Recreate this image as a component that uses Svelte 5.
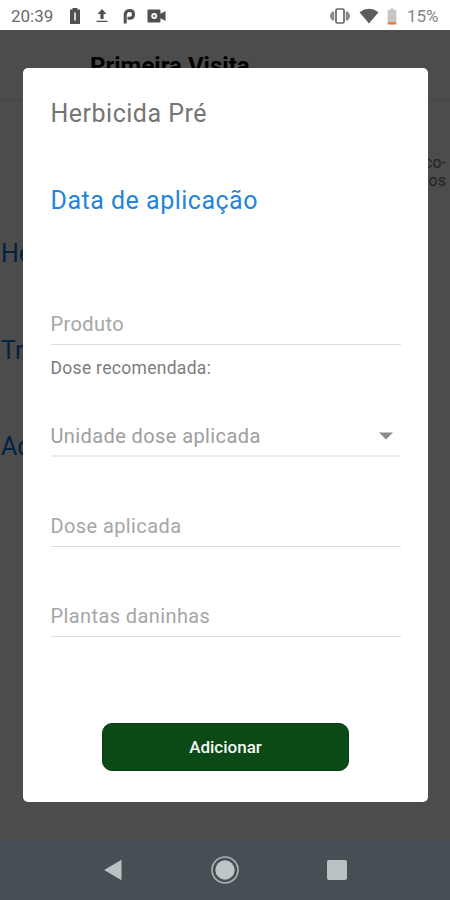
<script>
  const sections = ['Herbicida Pré', 'Tratamento', 'Adubação'];

  let product = $state('');
  let dose = $state('');
  let weeds = $state('');
</script>

<div class="phone">
  <header class="status">
    <span class="clock">20:39</span>
    <svg class="i-battery" width="12" height="18" viewBox="0 0 12 18">
      <path fill="#505050" d="M3.5 1h5v1.5H11V17H1V2.500h2.500z" />
      <path fill="#e8e8e8" d="M5.200 5.500h1.700v8H5.200z" />
    </svg>
    <svg class="i-upload" width="12" height="14" viewBox="0 0 12 14">
      <path fill="#505050" d="M6 0l4.500 5H7.600v5H4.400V5H1.500zM.5 11.700h11V13H.5z" />
    </svg>
    <svg class="i-parking" width="14" height="17" viewBox="0 0 14 17">
      <path fill="none" stroke="#505050" stroke-width="3" d="M3.200 15.500V7.500C3.200 4 5 2.500 7.500 2.500C10 2.500 11.500 4 11.500 6.300C11.500 8.700 10 10.300 7.600 10.300H5.500" />
    </svg>
    <svg class="i-camera" width="19" height="14" viewBox="0 0 19 14">
      <path fill="#505050" d="M1.500.5h11q1 0 1 1v3.300L18.500 2v10l-5-2.800v3.300q0 1-1 1h-11q-1 0-1-1v-11q0-1 1-1z" />
      <circle cx="7.200" cy="7" r="3" fill="#fff" />
      <circle cx="7.200" cy="7" r="1.300" fill="#707070" />
    </svg>
    <span class="spacer"></span>
    <svg class="i-vibrate" width="22" height="16" viewBox="0 0 22 16">
      <rect x="7" y="1" width="8" height="14" rx="1.300" fill="none" stroke="#686868" stroke-width="1.700" />
      <path fill="#8a8a8a" d="M3 3.500h2.300v9H3L.5 8zM19 3.500h-2.300v9H19L21.500 8z" />
    </svg>
    <svg class="i-wifi" width="20" height="16" viewBox="0 0 20 16">
      <path fill="#5c5c5c" d="M.5 4.300Q10-2.600 19.500 4.300L10 15.500z" />
    </svg>
    <svg class="i-charge" width="10" height="17" viewBox="0 0 10 17">
      <path fill="#c6c6c6" d="M3 .5h4V2h2.300v12.500H.7V2H3z" />
      <path fill="#ef7434" d="M.7 14.200h8.600v2.300H.7z" />
    </svg>
    <span class="percent">15%</span>
  </header>

  <main class="screen">
    <div class="page">
      <h1>Primeira Visita</h1>
      <p class="steps">Reco-<br />lhidos</p>
      {#each sections as section}
        <p class="section">{section}</p>
      {/each}
    </div>

    <div class="backdrop">
      <form class="dialog">
        <h2>Herbicida Pré</h2>
        <a class="date" href="#data">Data de aplicação</a>
        <input class="product" placeholder="Produto" bind:value={product} />
        <p class="hint">Dose recomendada:</p>
        <div class="select">
          <span>Unidade dose aplicada</span>
          <svg width="14" height="8" viewBox="0 0 14 8">
            <path fill="#8c8c8c" d="M0 .5h14L7 7.500z" />
          </svg>
        </div>
        <input class="dose" placeholder="Dose aplicada" bind:value={dose} />
        <input class="weeds" placeholder="Plantas daninhas" bind:value={weeds} />
        <button type="button">Adicionar</button>
      </form>
    </div>
  </main>

  <nav class="navbar">
    <svg width="20" height="22" viewBox="0 0 20 22">
      <path fill="#bcc2c4" d="M1.200 11L18.500.8v20.400z" />
    </svg>
    <svg width="30" height="30" viewBox="0 0 30 30">
      <circle cx="15" cy="15" r="13" fill="none" stroke="#a9b0b3" stroke-width="1.700" />
      <circle cx="15" cy="15" r="9.700" fill="#c0c5c7" />
    </svg>
    <svg width="20" height="20" viewBox="0 0 20 20">
      <rect width="20" height="20" rx="2" fill="#bbc0c2" />
    </svg>
  </nav>
</div>

<style>
  :global(body) {
    margin: 0;
  }

  .phone {
    display: flex;
    flex-direction: column;
    width: 450px;
    height: 900px;
    overflow: hidden;
    font-family: Roboto, 'Liberation Sans', sans-serif;
  }

  h1,
  h2,
  p {
    margin: 0;
    font-weight: 400;
  }

  .status {
    display: flex;
    align-items: center;
    box-sizing: border-box;
    height: 30px;
    padding: 2px 9px 0 11px;
    background: #fff;
    color: #6b6b6b;
    font-size: 17px;
  }

  .clock {
    width: 58px;
  }

  .i-upload {
    margin-left: 15px;
  }

  .i-parking {
    margin-left: 14px;
  }

  .i-camera {
    margin-left: 11px;
  }

  .spacer {
    flex: 1;
  }

  .i-wifi {
    margin-left: 8px;
  }

  .i-charge {
    margin-left: 8px;
  }

  .percent {
    width: 34px;
    margin-left: 10px;
    color: #858585;
  }

  .screen {
    position: relative;
    flex: 1;
    min-height: 0;
    overflow: hidden;
  }

  .page {
    height: 100%;
    background: #fff;
  }

  h1 {
    height: 70px;
    padding-left: 90px;
    border-bottom: 1px solid #e8e8e8;
    color: #000;
    font-size: 24px;
    font-weight: 700;
    line-height: 73px;
    white-space: nowrap;
  }

  .steps {
    padding: 53px 4px 24px 0;
    color: #777;
    font-size: 16px;
    line-height: 18px;
    text-align: right;
  }

  .section {
    height: 96.500px;
    padding-left: 1px;
    color: #0a74da;
    font-size: 25px;
    line-height: 80px;
  }

  .backdrop {
    position: absolute;
    inset: 0;
    display: flex;
    align-items: flex-start;
    justify-content: center;
    padding-top: 38px;
    background: rgba(0, 0, 0, 0.7);
  }

  .dialog {
    display: flex;
    flex-direction: column;
    box-sizing: border-box;
    width: 405px;
    height: 734px;
    padding: 30px 27px 0 28px;
    border-radius: 5px;
    background: #fff;
  }

  h2 {
    color: #757575;
    font-size: 25px;
    line-height: 32px;
    letter-spacing: 0.5px;
  }

  .date {
    margin-top: 55px;
    color: #2584d8;
    font-size: 25px;
    line-height: 32px;
    letter-spacing: 0.5px;
    text-decoration: none;
  }

  input,
  .select {
    box-sizing: border-box;
    width: 100%;
    height: 36px;
    padding: 0 0 5px;
    border: 0;
    border-bottom: 1.500px solid #dedede;
    border-radius: 0;
    outline: 0;
    background: none;
    color: #9e9e9e;
    font: 20px/30px Roboto, 'Liberation Sans', sans-serif;
    letter-spacing: 0.4px;
  }

  input::placeholder {
    color: #a6a6a6;
    opacity: 1;
  }

  .product {
    margin-top: 92px;
  }

  .hint {
    margin-top: 11px;
    color: #7c7c7c;
    font-size: 17.500px;
    line-height: 24px;
    letter-spacing: 0.3px;
  }

  .select {
    display: flex;
    align-items: center;
    justify-content: space-between;
    margin-top: 41px;
    padding-right: 8px;
    border-bottom: 2px solid #ececec;
  }

  .dose {
    margin-top: 54px;
  }

  .weeds {
    margin-top: 54px;
  }

  button {
    align-self: center;
    width: 247px;
    height: 48px;
    margin-top: 86px;
    padding: 0;
    border: 1px solid #073b10;
    border-radius: 10px;
    background: #0b4a16;
    color: #f4f8f4;
    font: 500 17px Roboto, 'Liberation Sans', sans-serif;
  }

  .navbar {
    display: flex;
    align-items: center;
    justify-content: space-between;
    box-sizing: border-box;
    height: 60px;
    padding: 0 103px;
    background: #464f54;
  }
</style>
